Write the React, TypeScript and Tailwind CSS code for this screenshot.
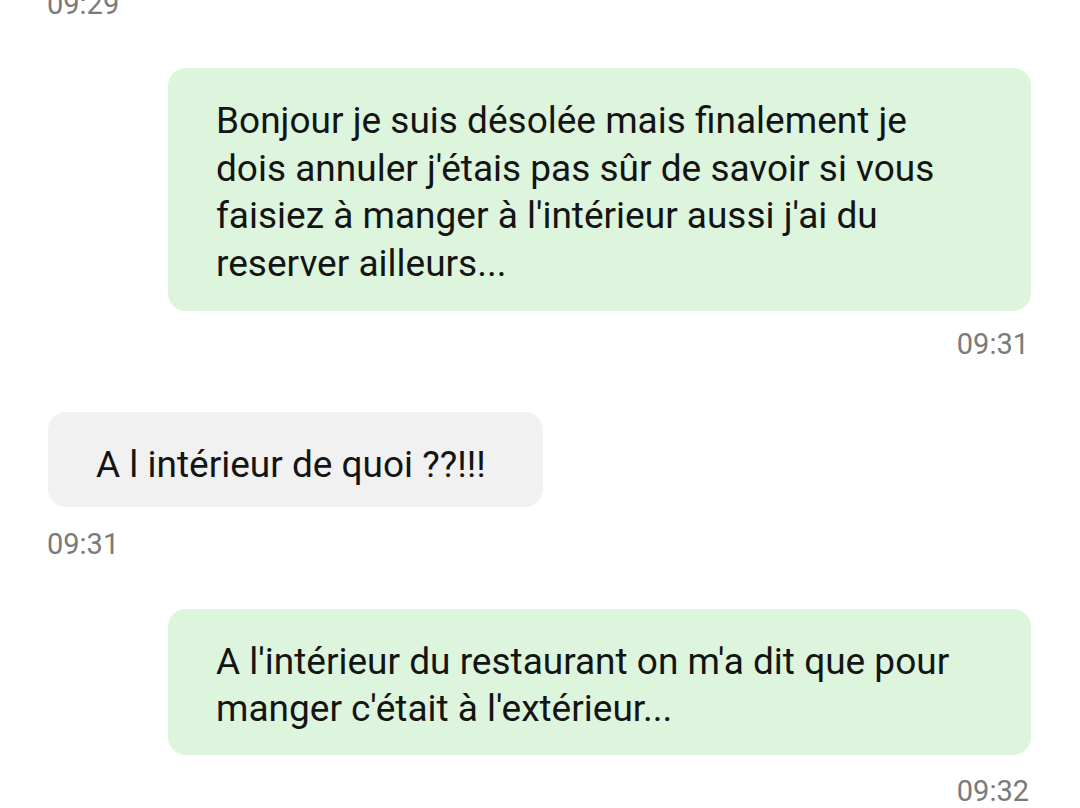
import React from 'react';

const font = { fontFamily: 'Roboto, "Noto Sans", sans-serif' };

const Stamp: React.FC<{ time: string; side: 'left' | 'right'; className?: string }> = ({ time, side, className = '' }) => (
  <div
    className={`h-[36px] text-[29px] leading-[36px] text-[#7a7a7a] ${
      side === 'right' ? 'self-end pr-[51px]' : 'self-start pl-[47px]'
    } ${className}`}
  >
    {time}
  </div>
);

export default function App() {
  return (
    <div className="w-[1080px] h-[808px] overflow-hidden bg-white" style={font}>
      <div className="flex flex-col">
        {/* Previous timestamp, cut off at the top */}
        <Stamp time="09:29" side="left" className="-mt-[14px]" />

        {/* Outgoing message */}
        <div className="mt-[46px] ml-[168px] mr-[49px] rounded-[18px] bg-[#ddf4dd] pl-[48px] pr-[30px] pt-[29px] pb-[24px] text-[37px] leading-[47.5px] text-[#141414]">
          Bonjour je suis désolée mais finalement je
          <br />
          dois annuler j'étais pas sûr de savoir si vous
          <br />
          faisiez à manger à l'intérieur aussi j'ai du
          <br />
          reserver ailleurs...
        </div>
        <Stamp time="09:31" side="right" className="mt-[15px]" />

        {/* Incoming message */}
        <div className="mt-[50px] ml-[48px] self-start rounded-[18px] bg-[#f1f1f1] pl-[48px] pr-[57px] pt-[29px] pb-[18px] text-[37px] leading-[47.5px] text-[#141414]">
          A l intérieur de quoi ??!!!
        </div>
        <Stamp time="09:31" side="left" className="mt-[19px]" />

        {/* Outgoing message */}
        <div className="mt-[47px] ml-[168px] mr-[49px] rounded-[18px] bg-[#ddf4dd] pl-[48px] pr-[30px] pt-[29px] pb-[22px] text-[37px] leading-[47.5px] text-[#141414]">
          A l'intérieur du restaurant on m'a dit que pour
          <br />
          manger c'était à l'extérieur...
        </div>
        <Stamp time="09:32" side="right" className="mt-[18px]" />
      </div>
    </div>
  );
}
